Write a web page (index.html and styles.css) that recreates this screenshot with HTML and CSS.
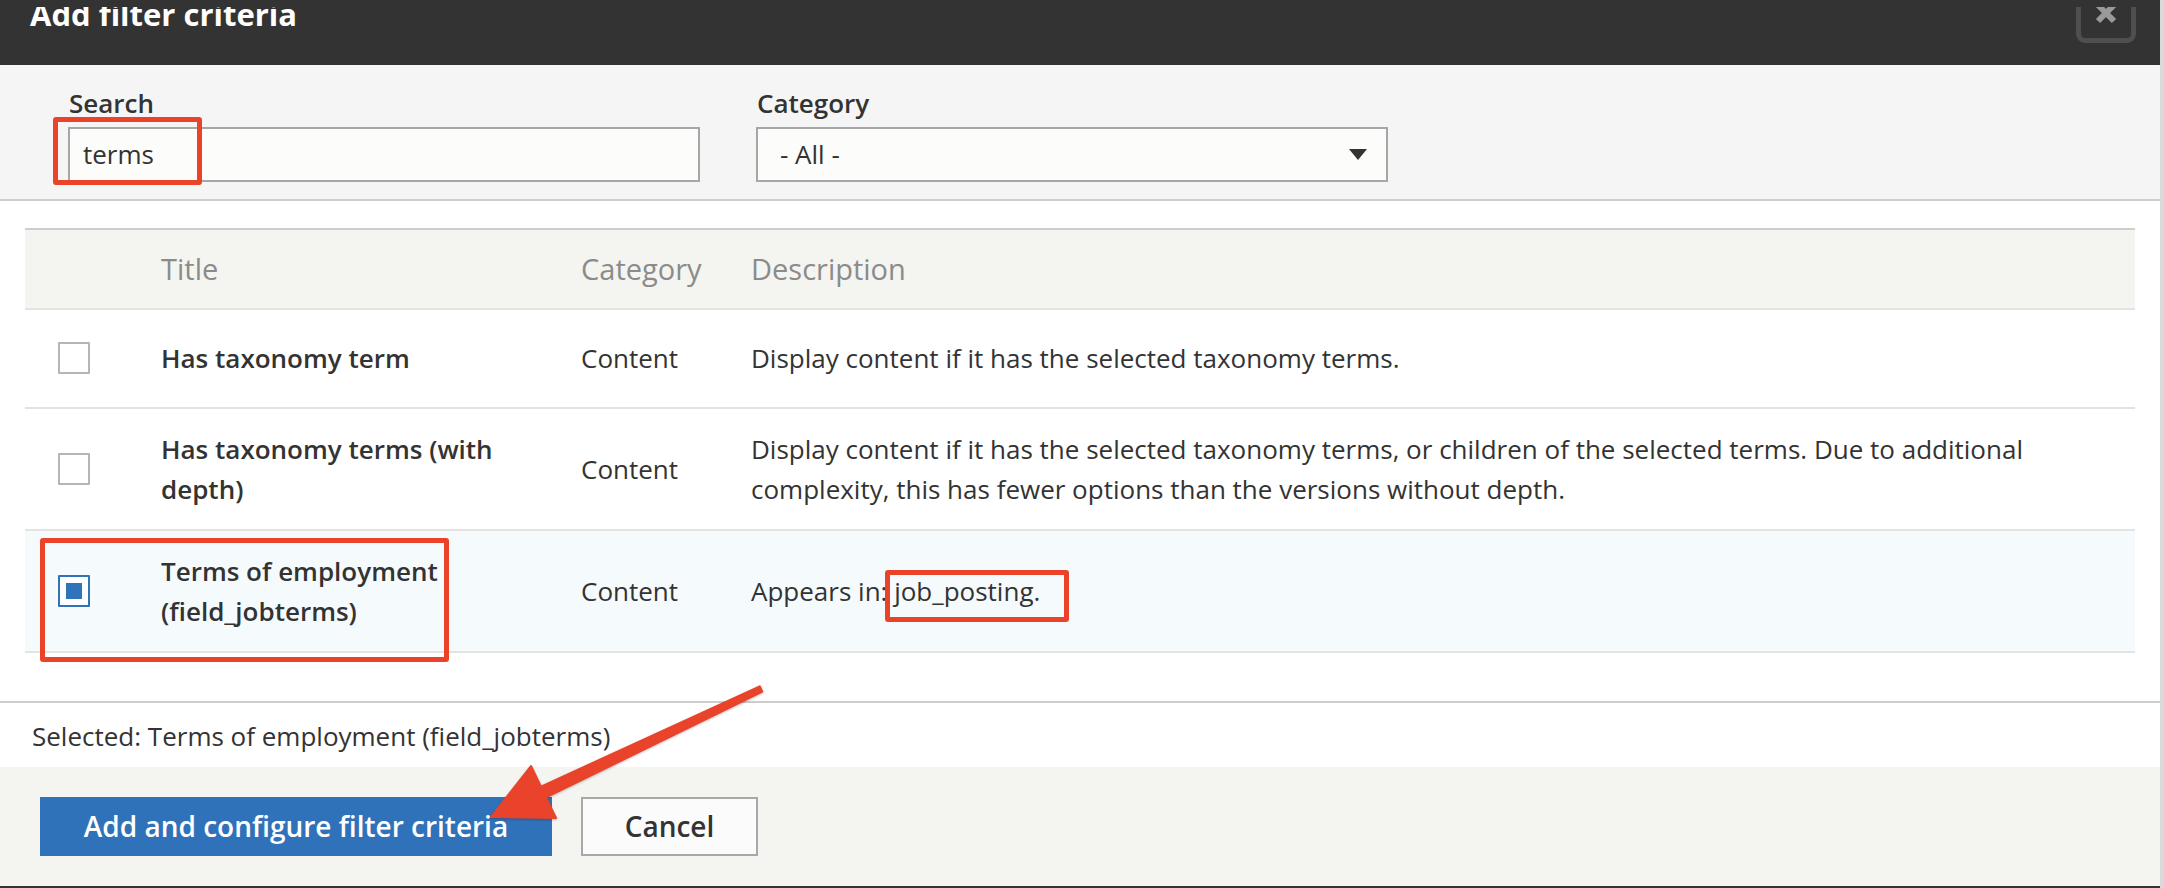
FILE: index.html
```html
<!DOCTYPE html>
<html lang="en">
<head>
<meta charset="utf-8">
<title>Add filter criteria</title>
<link rel="stylesheet" href="styles.css">
</head>
<body>
<div class="dialog">
  <header class="titlebar">
    <h1 class="title">Add filter criteria</h1>
    <button class="close" aria-label="Close">
      <svg viewBox="0 0 24 24" width="24" height="24"><path d="M4 4L20 20M20 4L4 20" stroke="#9a9a9a" stroke-width="6" fill="none"/></svg>
    </button>
  </header>

  <div class="filters">
    <div class="field field-search">
      <label class="label">Search</label>
      <div class="input">terms</div>
    </div>
    <div class="field">
      <label class="label">Category</label>
      <div class="select"><span>- All -</span><svg class="caret" viewBox="0 0 18 11" width="18" height="11"><polygon points="0,0 18,0 9,11" fill="#333"/></svg></div>
    </div>
  </div>

  <div class="content">
    <table class="grid">
      <colgroup><col class="c-check"><col class="c-title"><col class="c-cat"><col></colgroup>
      <thead>
        <tr><th></th><th>Title</th><th>Category</th><th>Description</th></tr>
      </thead>
      <tbody>
        <tr class="r1">
          <td><span class="cb"></span></td>
          <td class="t">Has taxonomy term</td>
          <td>Content</td>
          <td>Display content if it has the selected taxonomy terms.</td>
        </tr>
        <tr>
          <td><span class="cb"></span></td>
          <td class="t">Has taxonomy terms (with depth)</td>
          <td>Content</td>
          <td>Display content if it has the selected taxonomy terms, or children of the selected terms. Due to additional complexity, this has fewer options than the versions without depth.</td>
        </tr>
        <tr class="sel">
          <td><span class="cb on"><span class="dot"></span></span></td>
          <td class="t">Terms of employment (field_jobterms)</td>
          <td>Content</td>
          <td>Appears in: job_posting.</td>
        </tr>
      </tbody>
    </table>
  </div>

  <div class="selected">Selected: Terms of employment (field_jobterms)</div>

  <div class="actions">
    <button class="btn primary">Add and configure filter criteria</button>
    <button class="btn secondary">Cancel</button>
  </div>
</div>

<div class="mark m1"></div>
<div class="mark m2"></div>
<div class="mark m3"></div>
<svg class="arrow" viewBox="0 0 2164 888" width="2164" height="888">
  <polygon points="491,817 531,766 541,786.6 759.7,686.3 762.3,691.7 546,797.4 556,818" fill="#e9432b" stroke="#e9432b" stroke-width="2" stroke-linejoin="round"/>
</svg>
</body>
</html>
```

FILE: styles.css
```css
* { box-sizing: border-box; }
html, body { margin: 0; }
body {
  width: 2164px;
  height: 888px;
  overflow: hidden;
  position: relative;
  background: #d9d9d9;
  font-family: "Open Sans", "Liberation Sans", sans-serif;
  color: #333;
}
.dialog { width: 2160px; background: #fff; }

.titlebar {
  height: 65px;
  background: #333;
  display: flex;
  justify-content: space-between;
  align-items: flex-start;
  padding: 0 24px 0 30px;
  overflow: hidden;
  position: relative;
}
.titlebar::before {
  content: "";
  position: absolute;
  left: 0; right: 0; top: 0;
  height: 7px;
  background: #333;
  z-index: 2;
}
.title {
  margin: -7px 0 0;
  font-size: 31px;
  font-weight: 700;
  color: #fff;
  line-height: normal;
}
.close {
  margin-top: -17px;
  width: 60px;
  height: 60px;
  border: 5px solid #4f4f4f;
  border-radius: 9px;
  background: #333;
  display: flex;
  align-items: center;
  justify-content: center;
  padding: 0;
}

.filters {
  height: 136px;
  background: #f5f5f5;
  border-bottom: 2px solid #cdcdcd;
  display: flex;
  gap: 56px;
  padding: 18px 0 0 68px;
}
.field { width: 632px; }
.label {
  display: block;
  font-size: 26px;
  font-weight: 600;
  line-height: 40px;
  margin-bottom: 4px;
  padding-left: 1px;
}
.input, .select {
  height: 55px;
  border: 2px solid #a6a6a6;
  background: #fcfcfa;
  font-size: 26px;
  line-height: 51px;
}
.input { padding-left: 13px; }
.select {
  display: flex;
  align-items: center;
  justify-content: space-between;
  padding: 0 19px 0 22px;
}
.caret { display: block; }

.content { padding: 27px 25px 48px 25px; }
.grid {
  width: 100%;
  border-collapse: separate;
  border-spacing: 0;
  table-layout: fixed;
  font-size: 26px;
  line-height: 40px;
}
.c-check { width: 136px; }
.c-title { width: 420px; }
.c-cat { width: 170px; }
.grid th, .grid td {
  padding: 20px 25px 20px 0;
  text-align: left;
  vertical-align: middle;
  border-bottom: 2px solid #e3e3df;
}
.grid th {
  background: #f4f4f0;
  border-top: 2px solid #cdcdcd;
  color: #8b8b8b;
  font-size: 29px;
  font-weight: 400;
  padding-top: 19px;
  padding-bottom: 19px;
}
.grid th:first-child, .grid td:first-child { padding-left: 33px; }
.grid .r1 td { padding-top: 28px; padding-bottom: 29px; }
.grid .t { font-weight: 600; }
.grid .sel td { background: #f5fafd; }

.cb {
  display: block;
  width: 32px;
  height: 32px;
  border: 2px solid #b5b5b5;
  background: #fff;
  border-radius: 1px;
}
.cb.on {
  border-color: #3073ba;
  padding: 6px;
}
.cb .dot {
  display: block;
  width: 16px;
  height: 16px;
  background: #3073ba;
}

.selected {
  border-top: 2px solid #cdcdcd;
  padding: 13px 32px 11px;
  font-size: 26px;
  line-height: 40px;
}

.actions {
  background: #f4f4f0;
  border-bottom: 2px solid #333;
  display: flex;
  gap: 29px;
  padding: 30px 0 30px 40px;
}
.btn {
  height: 59px;
  font-family: "Open Sans", "Liberation Sans", sans-serif;
  font-size: 28px;
  font-weight: 600;
  line-height: 40px;
  padding: 0 0 2px;
  text-align: center;
}
.primary {
  width: 512px;
  background: #3072b9;
  color: #fff;
  border: none;
}
.secondary {
  width: 177px;
  background: #fbfbfb;
  color: #333;
  border: 2px solid #a8a8a8;
}

.mark {
  position: absolute;
  border: 5px solid #ea4329;
  border-radius: 3px;
}
.m1 { left: 53px; top: 117px; width: 149px; height: 68px; }
.m2 { left: 40px; top: 538px; width: 409px; height: 124px; }
.m3 { left: 885px; top: 570px; width: 184px; height: 52px; }

.arrow {
  position: absolute;
  left: 0;
  top: 0;
  pointer-events: none;
  filter: drop-shadow(0 1px 1px rgba(0,0,0,0.25));
}
```
